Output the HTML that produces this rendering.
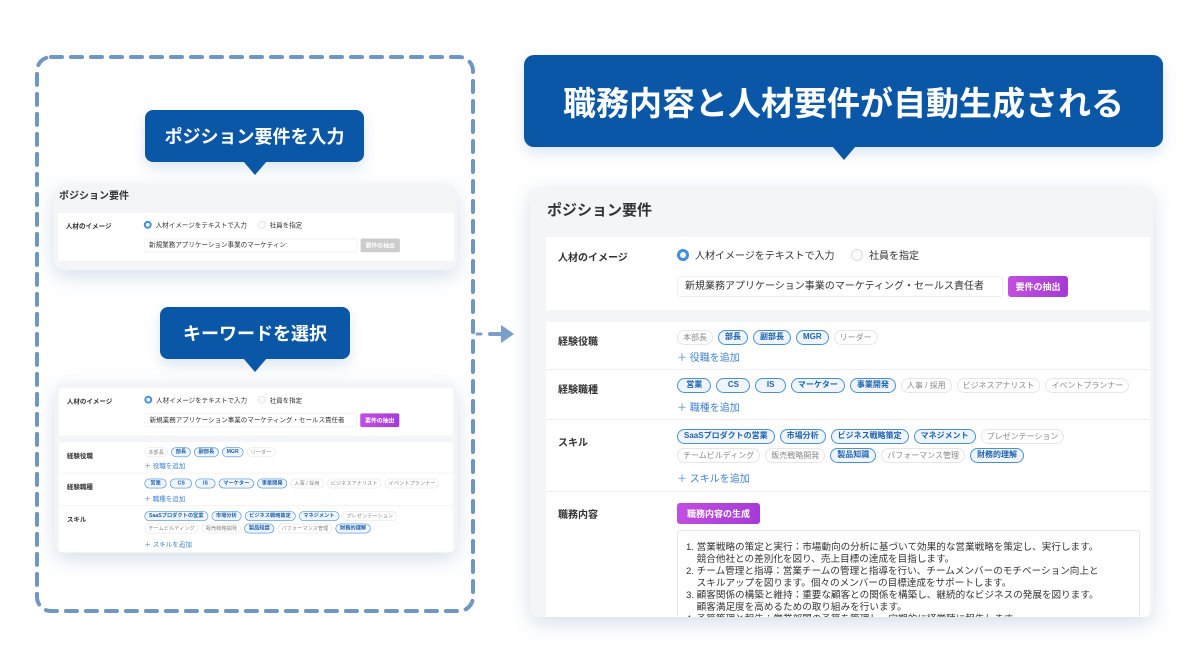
<!DOCTYPE html>
<html><head><meta charset="utf-8"><style>
*{box-sizing:border-box;margin:0;padding:0}
body{width:1200px;height:664px;background:#fff;position:relative;overflow:hidden;font-family:"Liberation Sans","Noto Sans CJK JP",sans-serif;color:#333}
.abs{position:absolute}
.bub{position:absolute;background:#0a57a8;color:#fff;font-weight:bold;border-radius:8px;display:flex;align-items:center;justify-content:center;box-shadow:0 6px 14px rgba(10,87,168,.15)}
.bub:after{content:"";position:absolute;left:50%;bottom:-13px;margin-left:-12px;border-left:12px solid transparent;border-right:12px solid transparent;border-top:14px solid #0a57a8}
.card{position:absolute;background:#f4f5f7;border-radius:10px;box-shadow:0 6px 20px rgba(60,110,170,.22);overflow:hidden}
.inner{position:absolute;left:0;top:0;width:604px;transform-origin:0 0}
.sec{background:#fff;position:relative}
.lbl{position:absolute;left:12px;font-size:10px;font-weight:bold;color:#333}
.rad{display:inline-block;width:12px;height:12px;border-radius:50%;vertical-align:-2px;margin-right:6px}
.on{border:3px solid #3f8ee0;background:#fff}
.off{border:1px solid #ddd;background:#fafafa}
.r{position:absolute;font-size:10px;color:#333;white-space:nowrap}
.inp{position:absolute;left:131px;top:39px;width:326px;height:21px;border:1px solid #eee;border-radius:3px;font-size:10px;line-height:19px;padding-left:7px;white-space:nowrap;overflow:hidden;color:#333}
.btn{position:absolute;height:21px;border-radius:3px;color:#fff;font-size:9px;font-weight:bold;display:flex;align-items:center;justify-content:center;background:linear-gradient(90deg,#c24fe0,#a53bd6)}
.row{position:relative;border-bottom:1px solid #eee}
.tags{position:absolute;left:131px;font-size:0;white-space:nowrap}
.t{display:inline-block;height:15px;line-height:13px;border-radius:8px;padding:0 5px;font-size:8px;margin-right:5px;border:1px solid #e6e6e6;color:#8a8a8a;margin-bottom:4px;vertical-align:top}
.t.s{border:1.5px solid #4a8fd6;background:#eef5fc;color:#1f62b0;font-weight:bold;line-height:12px;padding:0 6px}
.add{position:absolute;left:131px;font-size:10px;color:#3f82d0}
.ta{position:absolute;left:131px;top:38px;width:463px;height:100px;border:1px solid #e6e6e6;border-radius:3px;padding:11px 8px;font-size:9.6px;line-height:12px;color:#333;white-space:nowrap}
.ta div{height:12px;line-height:12px}
</style></head><body>

<svg class="abs" style="left:0;top:0" width="1200" height="664">
<rect x="37" y="57" width="436" height="554" rx="14" fill="none" stroke="#6f97c4" stroke-width="4" stroke-dasharray="11 9" stroke-linecap="round"/>
<line x1="477" y1="334" x2="481" y2="334" stroke="#7a9fc8" stroke-width="3" stroke-linecap="round"/>
<line x1="490" y1="334" x2="503" y2="334" stroke="#7a9fc8" stroke-width="4" stroke-linecap="round"/>
<polygon points="501,325 514,334 501,343" fill="#7a9fc8"/>
</svg>

<div class="bub" style="left:145px;top:110px;width:219px;height:52px;font-size:18px">ポジション要件を入力</div>
<div class="bub" style="left:160px;top:307px;width:190px;height:52px;font-size:18px">キーワードを選択</div>
<div class="bub" style="left:524px;top:55px;width:639px;height:92px;font-size:33px;border-radius:10px">職務内容と人材要件が自動生成される</div>

<!-- small card 1 -->
<div class="card" style="left:54px;top:185px;width:403px;height:85px">
 <div class="abs" style="left:5px;top:2px;font-size:10px;font-weight:bold;color:#333">ポジション要件</div>
 <div class="inner" style="left:4px;top:28px;transform:scale(0.655)">
  <div class="sec" style="height:73px">
   <div class="lbl" style="top:12px">人材のイメージ</div>
   <div class="r" style="left:131px;top:10px"><span class="rad on"></span>人材イメージをテキストで入力</div>
   <div class="r" style="left:305px;top:10px"><span class="rad off"></span>社員を指定</div>
   <div class="inp">新規業務アプリケーション事業のマーケティン:</div>
   <div class="btn" style="left:462px;top:39px;width:60px;background:#ccc">要件の抽出</div>
  </div>
 </div>
</div>

<!-- small card 2 -->
<div class="card" style="left:55px;top:383px;width:402px;height:170px">
 <div class="inner" style="left:4px;top:5px;transform:scale(0.652)">
  <div class="sec" style="height:73px;margin-bottom:10px">
   <div class="lbl" style="top:12px">人材のイメージ</div>
   <div class="r" style="left:131px;top:10px"><span class="rad on"></span>人材イメージをテキストで入力</div>
   <div class="r" style="left:305px;top:10px"><span class="rad off"></span>社員を指定</div>
   <div class="inp">新規業務アプリケーション事業のマーケティング・セールス責任者</div>
   <div class="btn" style="left:462px;top:39px;width:60px">要件の抽出</div>
  </div>
  <div class="sec">
   <div class="row" style="height:48px"><div class="lbl" style="top:12px">経験役職</div>
    <div class="tags" style="top:8px"><span class="t">本部長</span><span class="t s">部長</span><span class="t s">副部長</span><span class="t s">MGR</span><span class="t">リーダー</span></div>
    <div class="add" style="top:28px">＋ 役職を追加</div></div>
   <div class="row" style="height:50px"><div class="lbl" style="top:12px">経験職種</div>
    <div class="tags" style="top:8px"><span class="t s">&nbsp;営業&nbsp;</span><span class="t s">&nbsp;&nbsp;CS&nbsp;&nbsp;</span><span class="t s">&nbsp;&nbsp;IS&nbsp;&nbsp;</span><span class="t s">マーケター</span><span class="t s">事業開発</span><span class="t">人事 / 採用</span><span class="t">ビジネスアナリスト</span><span class="t">イベントプランナー</span></div>
    <div class="add" style="top:30px">＋ 職種を追加</div></div>
   <div class="row" style="height:72px"><div class="lbl" style="top:12px">スキル</div>
    <div class="tags" style="top:8px"><span class="t s">SaaSプロダクトの営業</span><span class="t s">市場分析</span><span class="t s">ビジネス戦略策定</span><span class="t s">マネジメント</span><span class="t">プレゼンテーション</span><br><span class="t">チームビルディング</span><span class="t">販売戦略開発</span><span class="t s">製品知識</span><span class="t">パフォーマンス管理</span><span class="t s">財務的理解</span></div>
    <div class="add" style="top:50px">＋ スキルを追加</div></div>
  </div>
 </div>
</div>

<!-- big card -->
<div class="card" style="left:530px;top:187px;width:623px;height:430px">
 <div class="abs" style="left:17px;top:12px;font-size:15px;font-weight:bold;color:#333">ポジション要件</div>
 <div class="inner" style="left:16px;top:50px">
  <div class="sec" style="height:73px;margin-bottom:12px">
   <div class="lbl" style="top:12px">人材のイメージ</div>
   <div class="r" style="left:131px;top:10px"><span class="rad on"></span>人材イメージをテキストで入力</div>
   <div class="r" style="left:305px;top:10px"><span class="rad off"></span>社員を指定</div>
   <div class="inp">新規業務アプリケーション事業のマーケティング・セールス責任者</div>
   <div class="btn" style="left:462px;top:39px;width:60px">要件の抽出</div>
  </div>
  <div class="sec">
   <div class="row" style="height:48px"><div class="lbl" style="top:11px">経験役職</div>
    <div class="tags" style="top:8px"><span class="t">本部長</span><span class="t s">部長</span><span class="t s">副部長</span><span class="t s">MGR</span><span class="t">リーダー</span></div>
    <div class="add" style="top:27px">＋ 役職を追加</div></div>
   <div class="row" style="height:50px"><div class="lbl" style="top:11px">経験職種</div>
    <div class="tags" style="top:8px"><span class="t s">&nbsp;営業&nbsp;</span><span class="t s">&nbsp;&nbsp;CS&nbsp;&nbsp;</span><span class="t s">&nbsp;&nbsp;IS&nbsp;&nbsp;</span><span class="t s">マーケター</span><span class="t s">事業開発</span><span class="t">人事 / 採用</span><span class="t">ビジネスアナリスト</span><span class="t">イベントプランナー</span></div>
    <div class="add" style="top:29px">＋ 職種を追加</div></div>
   <div class="row" style="height:72px"><div class="lbl" style="top:14px">スキル</div>
    <div class="tags" style="top:9px"><span class="t s">SaaSプロダクトの営業</span><span class="t s">市場分析</span><span class="t s">ビジネス戦略策定</span><span class="t s">マネジメント</span><span class="t">プレゼンテーション</span><br><span class="t">チームビルディング</span><span class="t">販売戦略開発</span><span class="t s">製品知識</span><span class="t">パフォーマンス管理</span><span class="t s">財務的理解</span></div>
    <div class="add" style="top:50px">＋ スキルを追加</div></div>
   <div class="row" style="height:150px;border:none"><div class="lbl" style="top:14px">職務内容</div>
    <div class="btn" style="left:131px;top:11px;width:83px">職務内容の生成</div>
    <div class="ta"><div>1. 営業戦略の策定と実行：市場動向の分析に基づいて効果的な営業戦略を策定し、実行します。</div><div>&nbsp;&nbsp;&nbsp;&nbsp;競合他社との差別化を図り、売上目標の達成を目指します。</div><div>2. チーム管理と指導：営業チームの管理と指導を行い、チームメンバーのモチベーション向上と</div><div>&nbsp;&nbsp;&nbsp;&nbsp;スキルアップを図ります。個々のメンバーの目標達成をサポートします。</div><div>3. 顧客関係の構築と維持：重要な顧客との関係を構築し、継続的なビジネスの発展を図ります。</div><div>&nbsp;&nbsp;&nbsp;&nbsp;顧客満足度を高めるための取り組みを行います。</div><div>4. 予算管理と報告：営業部門の予算を管理し、定期的に経営陣に報告します。</div></div>
   </div>
  </div>
 </div>
</div>
</body></html>
